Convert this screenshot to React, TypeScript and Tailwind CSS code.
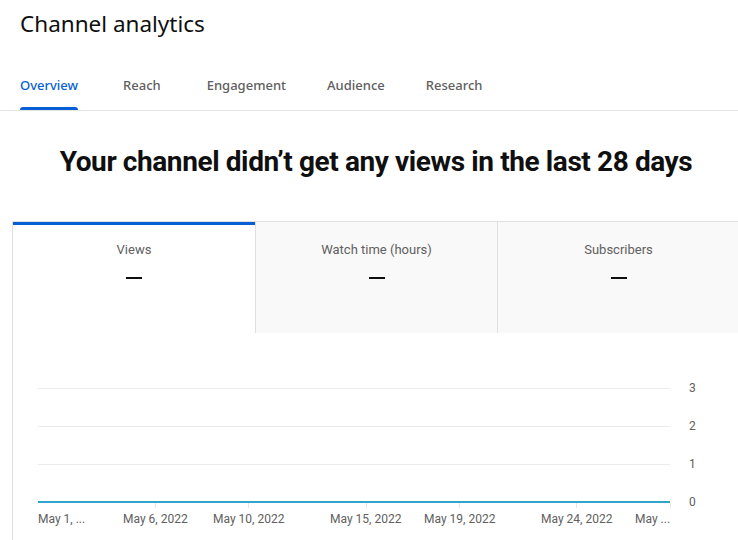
import React from "react";

const tabs = [
  { label: "Overview", ml: "ml-0" },
  { label: "Reach", ml: "ml-[45px]" },
  { label: "Engagement", ml: "ml-[46px]" },
  { label: "Audience", ml: "ml-[41px]" },
  { label: "Research", ml: "ml-[41px]" },
];

const metrics = [
  { label: "Views", active: true },
  { label: "Watch time (hours)", active: false },
  { label: "Subscribers", active: false },
];

// chart coordinates are relative to the chart box (card left = 12px, chart top = 333px)
const gridY = [55, 93, 131];
const yLabels = ["3", "2", "1", "0"];
const xLabels = [
  { text: "May 1, ...", left: 25 },
  { text: "May 6, 2022", left: 110 },
  { text: "May 10, 2022", left: 200 },
  { text: "May 15, 2022", left: 317 },
  { text: "May 19, 2022", left: 411 },
  { text: "May 24, 2022", left: 528 },
  { text: "May ...", left: 622 },
];
const ticks = [142, 235, 353, 446, 563, 657];

export default function App() {
  return (
    <div className="w-[738px] h-[540px] overflow-hidden bg-white font-['Roboto',sans-serif]">
      <h1 className="px-5 pt-[9px] text-[22.5px] leading-[30px] text-[#0f0f0f] font-['Noto_Sans',sans-serif]">
        Channel analytics
      </h1>

      <div className="mt-[34px] border-b border-[#e5e5e5] flex px-5 font-['Noto_Sans',sans-serif] text-[13px] font-medium">
        {tabs.map((t, i) => (
          <div key={t.label} className={"relative h-[37px] flex items-start pt-[3px] " + t.ml}>
            <span className={i === 0 ? "text-[#065fd4]" : "text-[#606060]"}>{t.label}</span>
            {i === 0 && (
              <div className="absolute bottom-0 left-0 right-0 h-[3px] rounded-t bg-[#065fd4]" />
            )}
          </div>
        ))}
      </div>

      <div className="h-[110px] flex items-center justify-center pl-[14px] pb-[8px]">
        <h2 className="text-[28px] font-bold text-[#0f0f0f] tracking-[-0.4px] whitespace-nowrap">
          Your channel didn’t get any views in the last 28 days
        </h2>
      </div>

      <div className="ml-3 w-[740px] border-l border-t border-[#e0e0e0]">
        <div className="flex h-[111px]">
          {metrics.map((m) => (
            <div
              key={m.label}
              className={
                "w-[242px] shrink-0 flex flex-col items-center " +
                (m.active
                  ? "bg-white border-t-[3px] border-[#065fd4] pt-[17px]"
                  : "bg-[#f9f9f9] border-l border-[#e0e0e0] pt-[20px]")
              }
            >
              <div className="text-[13px] leading-[16px] text-[#606060]">{m.label}</div>
              <div className="mt-[19px] w-[16px] h-[2px] bg-[#0f0f0f]" />
            </div>
          ))}
        </div>

        <div className="relative h-[210px]">
          {gridY.map((y) => (
            <div key={y} className="absolute left-[25px] w-[632px] h-px bg-[#ececec]" style={{ top: y }} />
          ))}
          <div className="absolute left-[25px] top-[168px] w-[632px] h-[2px] bg-[#2ea4cf]" />
          {ticks.map((x) => (
            <div key={x} className="absolute top-[170px] w-px h-[5px] bg-[#e5e5e5]" style={{ left: x }} />
          ))}
          {yLabels.map((l, i) => (
            <div
              key={l}
              className="absolute left-[676px] text-[12px] leading-[14px] text-[#606060]"
              style={{ top: 48 + i * 38 }}
            >
              {l}
            </div>
          ))}
          {xLabels.map((l) => (
            <div
              key={l.text}
              className="absolute top-[179px] text-[12px] leading-[14px] text-[#606060] whitespace-nowrap"
              style={{ left: l.left }}
            >
              {l.text}
            </div>
          ))}
        </div>
      </div>
    </div>
  );
}
